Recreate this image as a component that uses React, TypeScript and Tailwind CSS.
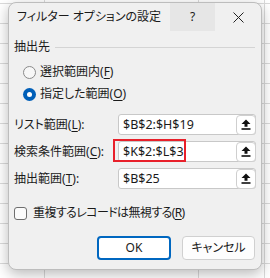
import React from 'react';

const font = "font-['Noto_Sans','Noto_Sans_CJK_JP',sans-serif] [font-feature-settings:'palt']";

function UploadIcon() {
  return (
    <svg width="10" height="11" viewBox="0 0 10 11">
      <path d="M5 0.5 L9.5 5 L6.5 5 L6.5 7.8 L3.5 7.8 L3.5 5 L0.5 5 Z" fill="#111" />
      <rect x="0.5" y="9.2" width="9" height="1.6" fill="#111" />
    </svg>
  );
}

function RangeRow({ label, mnemonic, value }: { label: string; mnemonic: string; value: string }) {
  return (
    <div className="flex items-center h-[21px]">
      <div className="w-[104px] text-[12px] leading-4">
        {label}(<span className="underline underline-offset-2">{mnemonic}</span>):
      </div>
      <div className="flex-1 flex items-center h-[21px] bg-white border border-[#c8c8c8] rounded-[3px] pl-[4px]">
        <span className="flex-1 text-[12.5px] leading-4 text-[#1a1a1a]">{value}</span>
        <button className="w-[20px] h-[20px] -mr-px flex items-center justify-center bg-white border border-[#cfcfcf] rounded-[4px]">
          <UploadIcon />
        </button>
      </div>
    </div>
  );
}

function Radio({ checked, label, mnemonic }: { checked: boolean; label: string; mnemonic: string }) {
  return (
    <div className="flex items-center h-5 pl-[9px] gap-[4px]">
      {checked ? (
        <span className="w-[13px] h-[13px] rounded-full bg-[#005fb8] flex items-center justify-center">
          <span className="w-[5px] h-[5px] rounded-full bg-white" />
        </span>
      ) : (
        <span className="w-[13px] h-[13px] rounded-full border border-[#8a8a8a] bg-[#f7f7f7]" />
      )}
      <span className="text-[12px] leading-4">
        {label}(<span className="underline underline-offset-2">{mnemonic}</span>)
      </span>
    </div>
  );
}

export default function App() {
  return (
    <div className={`w-[270px] h-[278px] overflow-hidden bg-white bg-[image:linear-gradient(to_right,transparent_44px,#dadada_44px,#dadada_45px,transparent_45px,transparent_198px,#dadada_198px,#dadada_199px,transparent_199px,transparent_264px,#dadada_264px,#dadada_265px,transparent_265px),repeating-linear-gradient(to_bottom,transparent_0,transparent_3px,#dadada_3px,#dadada_4px,transparent_4px,transparent_20px)] pt-[2px] pl-[8px] ${font} text-[#1a1a1a]`}>
      <div className="relative w-[254px] h-[268px] bg-[#f0f0f0] border border-[#bdbdbd] rounded-[8px] shadow-[0_4px_14px_rgba(0,0,0,0.28)] overflow-hidden flex flex-col">
        {/* title bar */}
        <div className="flex items-center h-[28px] shrink-0">
          <div className="flex-1 pl-[8px] text-[12px] leading-4">フィルター オプションの設定</div>
          <div className="w-[45px] h-[28px] bg-[#e6e6e6] flex items-center justify-center text-[12px]">?</div>
          <div className="w-[46px] h-[28px] flex items-center justify-center">
            <svg width="11" height="11" viewBox="0 0 11 11">
              <path d="M0.5 0.5 L10.5 10.5 M10.5 0.5 L0.5 10.5" stroke="#222" strokeWidth="1" />
            </svg>
          </div>
        </div>

        <div className="flex flex-col px-[5px] pt-[8px]">
          {/* group header */}
          <div className="flex items-center h-4 gap-[5px]">
            <span className="text-[12px] leading-4">抽出先</span>
            <div className="flex-1 h-px bg-[#d4d4d4] mr-[1px]" />
          </div>

          <div className="flex flex-col gap-[2px] mt-[7px]">
            <Radio checked={false} label="選択範囲内" mnemonic="F" />
            <Radio checked={true} label="指定した範囲" mnemonic="O" />
          </div>

          <div className="relative flex flex-col gap-[6px] mt-[10px]">
            <RangeRow label="リスト範囲" mnemonic="L" value="$B$2:$H$19" />
            <RangeRow label="検索条件範囲" mnemonic="C" value="$K$2:$L$3" />
            <RangeRow label="抽出範囲" mnemonic="T" value="$B$25" />
            {/* annotation box */}
            <div className="absolute left-[99px] top-[25px] w-[73px] h-[23px] border-2 border-[#e8202a]" />
          </div>

          <div className="flex items-center h-4 gap-[6px] mt-[16px]">
            <span className="w-[13px] h-[13px] rounded-[3px] border border-[#6e6e6e] bg-[#fbfbfb]" />
            <span className="text-[12px] leading-4 tracking-[-0.6px]">
              重複するレコードは無視する(<span className="underline underline-offset-2">R</span>)
            </span>
          </div>

          <div className="flex justify-end gap-[11px] mt-[15px] pr-[1px]">
            <button className="w-[74px] h-[24px] bg-white border-2 border-[#0067c0] rounded-[4px] text-[12px] leading-4">OK</button>
            <button className="w-[73px] h-[24px] bg-[#fdfdfd] border border-[#d0d0d0] rounded-[4px] text-[12px] leading-4">キャンセル</button>
          </div>
        </div>
      </div>
    </div>
  );
}
